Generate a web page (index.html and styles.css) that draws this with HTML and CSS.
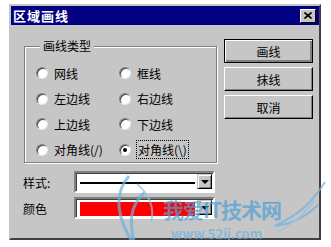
FILE: index.html
```html
<!DOCTYPE html>
<html lang="zh">
<head>
    <meta charset="UTF-8">
    <meta name="viewport" content="width=device-width, initial-scale=1.0">
    <title>区域画线</title>
    <link rel="stylesheet" href="styles.css">
</head>
<body>
    <div class="dialog">
        <div class="titlebar">
            <span class="title">区域画线</span>
            <span class="close">
                <svg width="8" height="7" viewBox="0 0 8 7"><path d="M0.5 0.5 L7.5 6.5 M7.5 0.5 L0.5 6.5" stroke="#000" stroke-width="1.6"/></svg>
            </span>
        </div>

        <div class="main">
            <div class="left">
                <fieldset class="group">
                    <legend>画线类型</legend>
                    <div class="options">
                        <label class="opt"><span class="radio"></span>网线</label>
                        <label class="opt"><span class="radio"></span>框线</label>
                        <label class="opt"><span class="radio"></span>左边线</label>
                        <label class="opt"><span class="radio"></span>右边线</label>
                        <label class="opt"><span class="radio"></span>上边线</label>
                        <label class="opt"><span class="radio"></span>下边线</label>
                        <label class="opt"><span class="radio"></span>对角线(/)</label>
                        <label class="opt"><span class="radio checked"></span><span class="focus">对角线(\)</span></label>
                    </div>
                </fieldset>

                <div class="field">
                    <span class="field-label">样式:</span>
                    <div class="combo">
                        <div class="combo-value"><span class="line-sample"></span></div>
                        <span class="drop"></span>
                    </div>
                </div>
                <div class="field">
                    <span class="field-label">颜色</span>
                    <div class="combo">
                        <div class="combo-value"><span class="color-sample"></span></div>
                        <span class="drop"></span>
                    </div>
                </div>
            </div>

            <div class="buttons">
                <button class="btn default">画线</button>
                <button class="btn">抹线</button>
                <button class="btn">取消</button>
            </div>
        </div>

        <!-- 水印 -->
        <div class="watermark">
            <svg class="wing" width="215" height="75" viewBox="0 0 215 75">
                <path d="M14 2 C-2 20 2 46 20 72 C14 50 14 32 30 18" fill="none" stroke="#6cb2e2" stroke-width="3"/>
                <path d="M22 10 C34 20 40 34 36 48" fill="none" stroke="#8cc4ea" stroke-width="2"/>
                <path d="M210 8 C196 30 184 40 160 52 C178 50 192 42 204 30" fill="none" stroke="#6cb2e2" stroke-width="2"/>
                <path d="M200 26 C188 42 176 50 164 58" fill="none" stroke="#8cc4ea" stroke-width="1.5"/>
            </svg>
            <span class="wm-name">我爱IT技术网</span>
            <span class="wm-url">www.52ij.com</span>
        </div>
    </div>
</body>
</html>
```

FILE: styles.css
```css
:root {
    --face: #c6c6c6;
    --shadow: #808080;
    --dark: #000000;
    --light: #ffffff;
    --title: #000080;
}

body {
    margin: 0;
    background: #fff;
    font-family: "Noto Sans CJK SC", "Liberation Sans", sans-serif;
    font-size: 12px;
    color: #000;
}

.dialog {
    position: relative;
    margin: 4px 0 0 9px;
    width: 308px;
    height: 232px;
    background: var(--face);
    border: 2px solid;
    border-color: var(--face) #404040 #404040 var(--face);
}

.titlebar {
    height: 19px;
    background: var(--title);
    display: flex;
    align-items: center;
    justify-content: space-between;
    padding: 0 3px 0 2px;
}

.title {
    color: #fff;
    font-weight: bold;
    font-size: 13px;
    letter-spacing: 1px;
    line-height: 19px;
}

.close {
    width: 14px;
    height: 12px;
    background: var(--face);
    border: 1px solid;
    border-color: var(--light) var(--dark) var(--dark) var(--light);
    display: flex;
    align-items: center;
    justify-content: center;
}

.main {
    display: flex;
    gap: 7px;
    padding: 14px 0 0 13px;
}

.left {
    width: 193px;
}

/* 分组框 */
.group {
    margin: 0;
    padding: 7px 0 0 11px;
    border: 1px solid var(--shadow);
    box-shadow: 1px 1px 0 var(--light), inset 1px 1px 0 var(--light);
    width: 180px;
}

.group legend {
    padding: 0 3px;
    margin-left: 4px;
    line-height: 14px;
    background: var(--face);
}

.options {
    display: grid;
    grid-template-columns: 83px 1fr;
    grid-template-rows: 26px 25px 26px 25px;
}

.opt {
    display: flex;
    align-items: center;
    gap: 6px;
}

.radio {
    position: relative;
    width: 10px;
    height: 10px;
    border-radius: 50%;
    background: #fff;
    border: 1px solid;
    border-color: var(--shadow) #e8e8e8 #e8e8e8 var(--shadow);
    box-shadow: inset 1px 1px 0 #404040;
    flex: none;
}

.radio.checked::after {
    content: '';
    position: absolute;
    left: 3px;
    top: 3px;
    width: 4px;
    height: 4px;
    border-radius: 50%;
    background: #000;
}

.focus {
    outline: 1px dotted #000;
    padding: 0 1px;
}

/* 样式 / 颜色 */
.field {
    display: flex;
    align-items: center;
    margin-top: 8px;
}

.field + .field {
    margin-top: 4px;
}

.field-label {
    width: 51px;
    margin-left: -1px;
}

.combo {
    width: 135px;
    height: 17px;
    display: flex;
    background: #fff;
    border: 2px solid;
    border-color: var(--shadow) var(--light) var(--light) var(--shadow);
    box-shadow: inset 1px 1px 0 #404040;
    padding: 1px 1px 0 1px;
}

.combo-value {
    flex: 1;
    display: flex;
    align-items: center;
    padding: 0 2px 0 3px;
}

.line-sample {
    display: block;
    width: 100%;
    height: 2px;
    background: #000;
}

.color-sample {
    display: block;
    width: 100%;
    height: 14px;
    background: #ff0000;
}

.drop {
    width: 13px;
    height: 13px;
    background: var(--face);
    border: 1px solid;
    border-color: var(--face) var(--dark) var(--dark) var(--face);
    box-shadow: inset 1px 1px 0 var(--light), inset -1px -1px 0 var(--shadow);
    display: flex;
    align-items: center;
    justify-content: center;
}

.drop::after {
    content: '';
    border-left: 4px solid transparent;
    border-right: 4px solid transparent;
    border-top: 4px solid #000;
}

/* 按钮 */
.buttons {
    display: flex;
    flex-direction: column;
    gap: 4px;
}

.btn {
    width: 89px;
    height: 24px;
    margin: 0;
    padding: 0;
    font-family: inherit;
    font-size: 12px;
    color: #000;
    background: var(--face);
    border: 1px solid;
    border-color: var(--light) var(--dark) var(--dark) var(--light);
    box-shadow: inset -1px -1px 0 var(--shadow);
}

.btn.default {
    border: 1px solid var(--dark);
    box-shadow: inset 1px 1px 0 var(--light), inset -2px -2px 0 var(--shadow);
}

/* 水印 */
.watermark {
    position: absolute;
    left: 104px;
    top: 168px;
    width: 215px;
    height: 75px;
    opacity: 0.7;
    pointer-events: none;
}

.wing {
    position: absolute;
    left: 0;
    top: 0;
}

.wm-name {
    position: absolute;
    left: 48px;
    top: 20px;
    font-size: 21px;
    font-weight: bold;
    color: #4f9fd8;
    letter-spacing: -1px;
    white-space: nowrap;
}

.wm-url {
    position: absolute;
    left: 56px;
    top: 50px;
    font-size: 13px;
    font-weight: bold;
    color: #6fb2e0;
    white-space: nowrap;
}
```
